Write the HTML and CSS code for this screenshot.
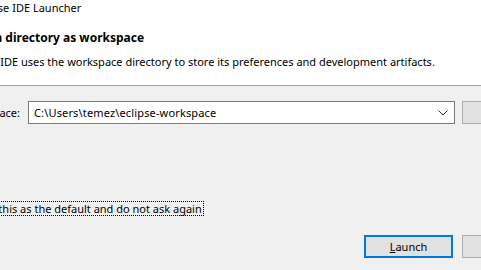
FILE: index.html
```html
<!DOCTYPE html>
<html lang="en">
<head>
    <meta charset="UTF-8">
    <title>Eclipse IDE Launcher</title>
    <link rel="stylesheet" href="styles.css">
</head>
<body>
    <div class="window">
        <div class="header">
            <div class="title">Eclipse IDE Launcher</div>
            <div class="heading">Select a directory as workspace</div>
            <div class="desc">Eclipse IDE uses the workspace directory to store its preferences and development artifacts.</div>
        </div>
        <div class="content">
            <div class="ws-row">
                <label class="ws-label">Workspace:</label>
                <div class="combo">
                    <span class="combo-text">C:\Users\temez\eclipse-workspace</span>
                    <svg class="combo-arrow" width="10" height="6" viewBox="0 0 10 6">
                        <path d="M0.5 0.5 L5 5 L9.5 0.5" fill="none" stroke="#333" stroke-width="1"/>
                    </svg>
                </div>
                <button class="btn">Browse...</button>
            </div>
            <div class="check-row">
                <span class="check-label">Use this as the default and do not ask again</span>
            </div>
            <div class="btn-row">
                <button class="btn btn-default"><u>L</u>aunch</button>
                <button class="btn">Cancel</button>
            </div>
        </div>
    </div>
</body>
</html>
```

FILE: styles.css
```css
body {
    margin: 0;
    overflow: hidden;
    background: #f0f0f0;
    font-family: "Noto Sans", sans-serif;
    font-size: 11px;
    color: #000;
}
.window {
    width: 481px;
    height: 270px;
    overflow: hidden;
}
.header {
    background: #fff;
    height: 86px;
    border-bottom: 1px solid #a0a0a0;
    box-sizing: border-box;
    white-space: nowrap;
}
.title {
    line-height: 16px;
    text-indent: -26px;
}
.heading {
    margin-top: 14px;
    font-weight: bold;
    font-size: 12px;
    line-height: 16px;
    text-indent: -44px;
}
.desc {
    margin-top: 8px;
    line-height: 16px;
    text-indent: -38px;
}
.content {
    padding-top: 15px;
}
.ws-row {
    display: flex;
    align-items: center;
    height: 23px;
}
.ws-label {
    white-space: nowrap;
    margin-left: -44px;
    width: 64px;
    text-align: right;
    margin-right: 8px;
    flex-shrink: 0;
}
.combo {
    width: 427px;
    height: 23px;
    box-sizing: border-box;
    border: 1px solid #7a7a7a;
    background: #fff;
    display: flex;
    align-items: center;
    justify-content: space-between;
    padding: 0 6px 0 5px;
    flex-shrink: 0;
}
.combo-text {
    white-space: nowrap;
    letter-spacing: 0.15px;
}
.btn {
    font-family: inherit;
    font-size: 11px;
    background: #e1e1e1;
    border: 1px solid #adadad;
    height: 23px;
    width: 89px;
    flex-shrink: 0;
    margin-left: 7px;
    padding: 0;
    color: #000;
}
.check-row {
    margin-top: 77px;
    height: 15px;
    display: flex;
}
.check-label {
    margin-left: -26px;
    border: 1px dotted #000;
    padding: 0 1px;
    line-height: 13px;
    white-space: nowrap;
}
.btn-row {
    margin-top: 19px;
    display: flex;
    padding-left: 364px;
}
.btn-row .btn {
    margin-left: 0;
    margin-right: 9px;
}
.btn-default {
    border: 2px solid #0078d7;
}
```
